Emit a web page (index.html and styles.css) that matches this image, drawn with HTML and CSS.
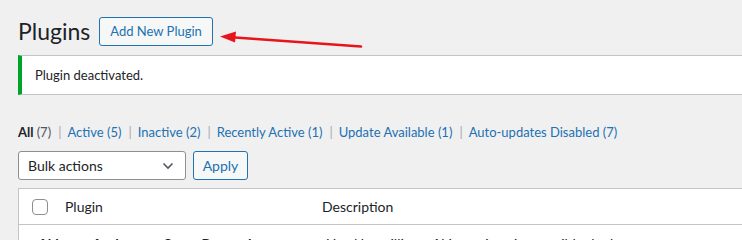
FILE: index.html
```html
<!DOCTYPE html>
<html lang="en">
<head>
    <meta charset="UTF-8">
    <title>Plugins</title>
    <link rel="stylesheet" href="styles.css">
</head>
<body>

    <div class="wrap">
        <div class="title-row">
            <h1 class="page-title">Plugins</h1>
            <a class="title-action" href="#">Add New Plugin</a>
        </div>

        <!-- arrow drawn over the screen -->
        <svg class="arrow" width="160" height="24" viewBox="0 0 160 24">
            <line x1="16" y1="12.5" x2="142" y2="21.5" stroke="#e8141b" stroke-width="2.6" stroke-linecap="round"/>
            <polygon points="1,11.5 17,6.5 16,17.5" fill="#e8141b"/>
        </svg>

        <div class="notice">
            <p>Plugin deactivated.</p>
        </div>

        <ul class="subsubsub">
            <li class="current">All <span class="count">(7)</span></li>
            <li><a href="#">Active <span class="count">(5)</span></a></li>
            <li><a href="#">Inactive <span class="count">(2)</span></a></li>
            <li><a href="#">Recently Active <span class="count">(1)</span></a></li>
            <li><a href="#">Update Available <span class="count">(1)</span></a></li>
            <li><a href="#">Auto-updates Disabled <span class="count">(7)</span></a></li>
        </ul>

        <div class="tablenav">
            <div class="select">
                <span>Bulk actions</span>
                <svg width="12" height="8" viewBox="0 0 12 8"><path d="M1.5 1.5 L6 6 L10.5 1.5" fill="none" stroke="#50575e" stroke-width="1.6"/></svg>
            </div>
            <button class="btn-apply">Apply</button>
        </div>

        <div class="plugins-table">
            <div class="table-head">
                <span class="check"></span>
                <span class="col-name">Plugin</span>
                <span class="col-desc">Description</span>
            </div>
            <div class="table-row">
                <span class="row-name">Akismet Anti-spam: Spam Protection</span>
                <span class="row-desc">Used by millions, Akismet is quite possibly the best way</span>
            </div>
        </div>
    </div>

</body>
</html>
```

FILE: styles.css
```css
body {
    margin: 0;
    background-color: #f0f0f1;
    color: #1d2327;
    font-family: Lato, "Noto Sans", sans-serif;
    font-size: 13px;
    overflow: hidden;
}
a {
    color: #2271b1;
    text-decoration: none;
}
.wrap {
    position: relative;
    padding: 17px 0 0 18px;
}
.title-row {
    display: flex;
    align-items: center;
    gap: 9px;
    height: 29px;
}
.page-title {
    margin: 0;
    font-size: 23px;
    font-weight: 400;
    line-height: 29px;
}
.title-action {
    display: block;
    height: 27px;
    line-height: 27px;
    padding: 0 10px;
    border: 1px solid #2271b1;
    border-radius: 3px;
    background-color: #f6f7f7;
}
.arrow {
    position: absolute;
    left: 219px;
    top: 25px;
}
.notice {
    margin-top: 9px;
    height: 38px;
    display: flex;
    align-items: center;
    background-color: white;
    border: 1px solid #c3c4c7;
    border-left: 4px solid #00a32a;
    border-right: none;
    padding-left: 13px;
}
.notice p {
    margin: 0;
}
.subsubsub {
    list-style: none;
    margin: 28px 0 0;
    padding: 0;
    display: flex;
    color: #646970;
    line-height: 18px;
}
.subsubsub li + li::before {
    content: "|";
    color: #a7aaad;
    padding: 0 6px 0 7px;
}
.subsubsub .current {
    color: #1d2327;
    font-weight: 700;
}
.subsubsub .current .count {
    color: #50575e;
    font-weight: 400;
}
.tablenav {
    display: flex;
    gap: 7px;
    margin-top: 10px;
    height: 29px;
}
.select {
    width: 146px;
    display: flex;
    align-items: center;
    justify-content: space-between;
    padding: 0 11px 0 9px;
    border: 1px solid #8c8f94;
    border-radius: 3px;
    background-color: white;
    font-size: 14px;
}
.btn-apply {
    width: 55px;
    padding: 0;
    border: 1px solid #2271b1;
    border-radius: 3px;
    background-color: #f6f7f7;
    color: #2271b1;
    font-family: inherit;
    font-size: 14px;
}
.plugins-table {
    margin-top: 8px;
    background-color: white;
    border: 1px solid #c3c4c7;
    border-right: none;
}
.table-head {
    display: flex;
    align-items: center;
    height: 35px;
    border-bottom: 1px solid #c3c4c7;
    font-size: 14px;
}
.check {
    width: 14px;
    height: 14px;
    margin-left: 13px;
    border: 1px solid #8c8f94;
    border-radius: 4px;
}
.col-name {
    margin-left: 17px;
    width: 257px;
}
.table-row {
    display: flex;
    padding: 10px 0 0 19px;
    font-size: 14px;
}
.row-name {
    width: 288px;
    font-weight: 700;
}
```
